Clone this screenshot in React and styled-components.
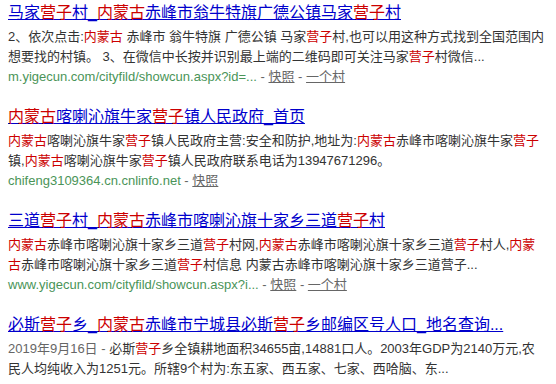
import React from "react"
import styled, { createGlobalStyle } from "styled-components"

const GlobalStyle = createGlobalStyle`
  html, body {
    margin: 0;
    padding: 0;
    background: #fff;
    overflow: hidden;
  }
  body {
    font-family: "Liberation Sans", Arial, "Noto Sans CJK SC", sans-serif;
  }
`

const Page = styled.div`
  padding: 1px 8px 0 8px;
  width: 538px;
`

const Result = styled.div`
  margin-bottom: 18px;
`

const Title = styled.a`
  display: block;
  font-size: 16px;
  line-height: 24px;
  color: #0000cc;
  text-decoration: underline;
  white-space: nowrap;
`

const Abstract = styled.div`
  margin-top: 2px;
  font-size: 13px;
  line-height: 20px;
  color: #333;
  word-break: break-all;
`

const Em = styled.em`
  font-style: normal;
  color: #cc0000;
`

const DateText = styled.span`
  color: #666;
`

const Meta = styled.div`
  font-size: 13px;
  line-height: 20px;
  color: #666;
`

const ShowUrl = styled.span`
  color: #4a9458;
`

const MetaLink = styled.a`
  color: #666;
  text-decoration: underline;
`

// "{...}" marks a highlighted keyword
function Marked({ text }) {
  const parts = text.split(/(\{[^}]*\})/)
  return parts.map((p, i) =>
    p.startsWith("{") ? <Em key={i}>{p.slice(1, -1)}</Em> : <React.Fragment key={i}>{p}</React.Fragment>
  )
}

const results = [
  {
    title: "马家{营子}村_{内蒙古}赤峰市翁牛特旗广德公镇马家{营子}村",
    abstract: "2、依次点击:{内蒙古} 赤峰市 翁牛特旗 广德公镇 马家{营子}村,也可以用这种方式找到全国范围内想要找的村镇。 3、在微信中长按并识别最上端的二维码即可关注马家{营子}村微信...",
    url: "m.yigecun.com/cityfild/showcun.aspx?id=...",
    extra: "一个村",
  },
  {
    title: "{内蒙古}喀喇沁旗牛家{营子}镇人民政府_首页",
    abstract: "{内蒙古}喀喇沁旗牛家{营子}镇人民政府主营:安全和防护,地址为:{内蒙古}赤峰市喀喇沁旗牛家{营子}镇,{内蒙古}喀喇沁旗牛家{营子}镇人民政府联系电话为13947671296。",
    url: "chifeng3109364.cn.cnlinfo.net",
  },
  {
    title: "三道{营子}村_{内蒙古}赤峰市喀喇沁旗十家乡三道{营子}村",
    abstract: "{内蒙古}赤峰市喀喇沁旗十家乡三道{营子}村网,{内蒙古}赤峰市喀喇沁旗十家乡三道{营子}村人,{内蒙古}赤峰市喀喇沁旗十家乡三道{营子}村信息 内蒙古赤峰市喀喇沁旗十家乡三道营子...",
    url: "www.yigecun.com/cityfild/showcun.aspx?i...",
    extra: "一个村",
  },
  {
    title: "必斯{营子}乡_{内蒙古}赤峰市宁城县必斯{营子}乡邮编区号人口_地名查询...",
    date: "2019年9月16日",
    abstract: "必斯{营子}乡全镇耕地面积34655亩,14881口人。2003年GDP为2140万元,农民人均纯收入为1251元。所辖9个村为:东五家、西五家、七家、西哈脑、东...",
  },
]

export default function App() {
  return (
    <>
      <GlobalStyle />
      <Page>
        {results.map((r, i) => (
          <Result key={i}>
            <Title href="#">
              <Marked text={r.title} />
            </Title>
            <Abstract>
              {r.date && <DateText>{r.date}&nbsp;-&nbsp;</DateText>}
              <Marked text={r.abstract} />
            </Abstract>
            {r.url && (
              <Meta>
                <ShowUrl>{r.url}</ShowUrl>
                {" - "}
                <MetaLink href="#">快照</MetaLink>
                {r.extra && (
                  <>
                    {" - "}
                    <MetaLink href="#">{r.extra}</MetaLink>
                  </>
                )}
              </Meta>
            )}
          </Result>
        ))}
      </Page>
    </>
  )
}
